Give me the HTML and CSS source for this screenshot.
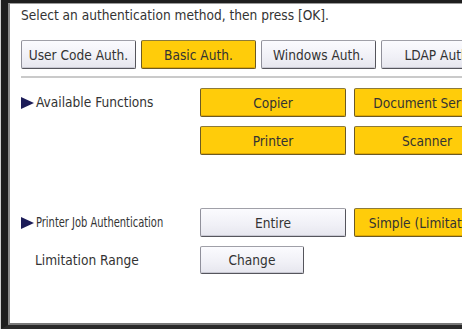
FILE: index.html
```html
<!DOCTYPE html>
<html lang="en">
<head>
    <meta charset="UTF-8">
    <title>Authentication Management</title>
    <link rel="stylesheet" href="styles.css">
</head>
<body>
    <div class="screen">
        <div class="panel">
            <p class="title">Select an authentication method, then press [OK].</p>

            <div class="tabs">
                <button class="btn tab">User Code Auth.</button>
                <button class="btn tab on">Basic Auth.</button>
                <button class="btn tab">Windows Auth.</button>
                <button class="btn tab">LDAP Auth.</button>
            </div>

            <hr class="sep">

            <div class="row funcs">
                <div class="label"><span class="arrow"></span>Available Functions</div>
                <div class="grid">
                    <button class="btn on">Copier</button>
                    <button class="btn on">Document Server</button>
                    <button class="btn on">Printer</button>
                    <button class="btn on">Scanner</button>
                </div>
            </div>

            <div class="row job">
                <div class="label"><span class="arrow"></span><span class="narrow">Printer Job Authentication</span></div>
                <div class="grid">
                    <button class="btn">Entire</button>
                    <button class="btn on">Simple (Limitation)</button>
                </div>
            </div>

            <div class="row range">
                <div class="label sub">Limitation Range</div>
                <button class="btn small">Change</button>
            </div>
        </div>
    </div>
</body>
</html>
```

FILE: styles.css
```css
body {
    margin: 0;
    width: 462px;
    height: 329px;
    overflow: hidden;
    background: #d0d0d0;
    font-family: "DejaVu Sans Condensed", "DejaVu Sans", sans-serif;
    font-size: 13.6px;
    color: #333;
}
.screen {
    margin-left: 1px;
    width: 620px;
    height: 329px;
    box-sizing: border-box;
    border-left: 7px solid #1e1e1e;
    border-top: 3px solid #1e1e1e;
    border-bottom: 4px solid #2a2a2a;
}
.panel {
    height: 100%;
    box-sizing: border-box;
    background: #fff;
    border-left: 2px solid #8a8a8a;
    border-top: 1px solid #9a9a9a;
    border-bottom: 2px solid #7a7a7a;
    padding: 3px 0 0 11px;
}
.title {
    margin: 0;
    line-height: 16px;
}
.btn {
    font-family: inherit;
    font-size: 13.6px;
    color: #333;
    height: 29px;
    padding: 0 6px;
    border: 1px solid #55555c;
    border-top-color: #a0a0a8;
    border-left-color: #90909a;
    border-radius: 2px;
    background: linear-gradient(#fbfbfe, #f0f0f6 60%, #e6e6ee);
    box-shadow: inset 0 -1px 0 #c8c8d2;
    white-space: nowrap;
    overflow: hidden;
    text-align: center;
}
.btn.on {
    background: #ffcc0a;
    border-color: #6b5a26;
    border-top-color: #8c7a3a;
    box-shadow: inset 0 -1px 0 #e0a800;
}
.tabs {
    display: flex;
    gap: 5px;
    margin-top: 17px;
}
.tab {
    width: 115px;
    flex: none;
}
.sep {
    margin: 7px 0 0;
    border: none;
    border-top: 2px solid #cacaca;
}
.row {
    display: flex;
    align-items: flex-start;
}
.label {
    width: 179px;
    flex: none;
    line-height: 29px;
    display: flex;
    align-items: center;
}
.label.sub {
    padding-left: 14px;
    width: 165px;
    line-height: 28px;
}
.arrow {
    flex: none;
    width: 0;
    height: 0;
    border-top: 6px solid transparent;
    border-bottom: 6px solid transparent;
    border-left: 13px solid #1c1c58;
    margin-right: 2px;
}
.narrow {
    display: inline-block;
    transform: scaleX(0.81);
    transform-origin: left center;
    white-space: nowrap;
}
.grid {
    display: grid;
    grid-template-columns: 146px 146px;
    gap: 9px 8px;
}
.grid .btn {
    width: 146px;
}
.funcs {
    margin-top: 10px;
}
.job {
    margin-top: 53px;
}
.range {
    margin-top: 9px;
}
.small {
    width: 104px;
    height: 28px;
}
```
